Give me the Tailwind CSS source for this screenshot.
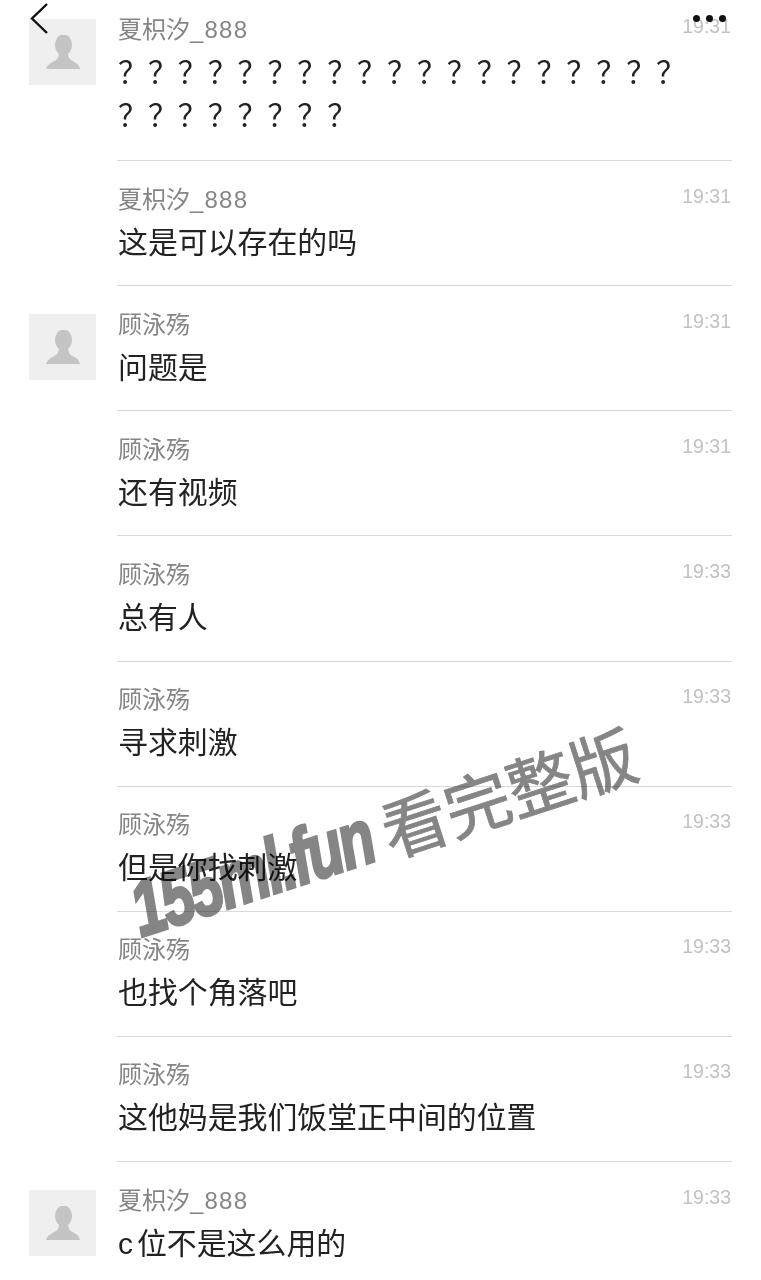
<!DOCTYPE html>
<html lang="zh">
<head>
  <meta charset="UTF-8" />
  <title>聊天记录</title>
  <script src="https://cdn.jsdelivr.net/npm/@tailwindcss/browser@4"></script>
</head>
<body class="bg-white">
  <div class="relative w-[761px] h-[1280px] overflow-hidden bg-white font-['Liberation_Sans','Noto_Sans_CJK_SC',sans-serif]">
    <div id="list" class="-mt-[10px] flex flex-col">

      <div class="flex h-[171px]">
        <div class="w-[117px] shrink-0 pl-[29px] pt-[29px]">
          <div class="w-[67px] h-[66px] bg-[#efefef] flex items-center justify-center">
            <svg width="36" height="35" viewBox="0 0 36 35" fill="#c4c4c4"><ellipse cx="18.5" cy="10" rx="8.5" ry="10.5"/><path d="M1 34c1-3 3-5 5-6 3-2 8-3 8-10h9c0 7 5 8 8 10 2 1 3 3 4 6z"/></svg>
          </div>
        </div>
        <div class="relative w-[615px] border-b border-[#d9d9d9] pl-px pt-[22px]">
          <div class="text-[24px] leading-[36px] text-[#858585]">夏枳汐<span class="tracking-[1.2px]">_888</span></div>
          <div class="text-[29.9px] leading-[43px] text-[#222] mt-[3px]">？？？？？？？？？？？？？？？？？？？<br />？？？？？？？？</div>
          <div class="absolute right-[1px] top-[24px] text-[19.5px] leading-[24px] text-[#c2c2c2]">19:31</div>
        </div>
      </div>

      <div class="flex h-[125.125px]">
        <div class="w-[117px] shrink-0"></div>
        <div class="relative w-[615px] border-b border-[#d9d9d9] pl-px pt-[20.6px]">
          <div class="text-[24px] leading-[36px] text-[#858585]">夏枳汐<span class="tracking-[1.2px]">_888</span></div>
          <div class="text-[29.9px] leading-[49.9px] text-[#222]">这是可以存在的吗</div>
          <div class="absolute right-[1px] top-[22.6px] text-[19.5px] leading-[24px] text-[#c2c2c2]">19:31</div>
        </div>
      </div>

      <div class="flex h-[125.125px]">
        <div class="w-[117px] shrink-0 pl-[29px] pt-[28px]">
          <div class="w-[67px] h-[66px] bg-[#efefef] flex items-center justify-center">
            <svg width="36" height="35" viewBox="0 0 36 35" fill="#c4c4c4"><ellipse cx="18.5" cy="10" rx="8.5" ry="10.5"/><path d="M1 34c1-3 3-5 5-6 3-2 8-3 8-10h9c0 7 5 8 8 10 2 1 3 3 4 6z"/></svg>
          </div>
        </div>
        <div class="relative w-[615px] border-b border-[#d9d9d9] pl-px pt-[20.6px]">
          <div class="text-[24px] leading-[36px] text-[#858585]">顾泳殇</div>
          <div class="text-[29.9px] leading-[49.9px] text-[#222]">问题是</div>
          <div class="absolute right-[1px] top-[22.6px] text-[19.5px] leading-[24px] text-[#c2c2c2]">19:31</div>
        </div>
      </div>

      <div class="flex h-[125.125px]">
        <div class="w-[117px] shrink-0"></div>
        <div class="relative w-[615px] border-b border-[#d9d9d9] pl-px pt-[20.6px]">
          <div class="text-[24px] leading-[36px] text-[#858585]">顾泳殇</div>
          <div class="text-[29.9px] leading-[49.9px] text-[#222]">还有视频</div>
          <div class="absolute right-[1px] top-[22.6px] text-[19.5px] leading-[24px] text-[#c2c2c2]">19:31</div>
        </div>
      </div>

      <div class="flex h-[125.125px]">
        <div class="w-[117px] shrink-0"></div>
        <div class="relative w-[615px] border-b border-[#d9d9d9] pl-px pt-[20.6px]">
          <div class="text-[24px] leading-[36px] text-[#858585]">顾泳殇</div>
          <div class="text-[29.9px] leading-[49.9px] text-[#222]">总有人</div>
          <div class="absolute right-[1px] top-[22.6px] text-[19.5px] leading-[24px] text-[#c2c2c2]">19:33</div>
        </div>
      </div>

      <div class="flex h-[125.125px]">
        <div class="w-[117px] shrink-0"></div>
        <div class="relative w-[615px] border-b border-[#d9d9d9] pl-px pt-[20.6px]">
          <div class="text-[24px] leading-[36px] text-[#858585]">顾泳殇</div>
          <div class="text-[29.9px] leading-[49.9px] text-[#222]">寻求刺激</div>
          <div class="absolute right-[1px] top-[22.6px] text-[19.5px] leading-[24px] text-[#c2c2c2]">19:33</div>
        </div>
      </div>

      <div class="flex h-[125.125px]">
        <div class="w-[117px] shrink-0"></div>
        <div class="relative w-[615px] border-b border-[#d9d9d9] pl-px pt-[20.6px]">
          <div class="text-[24px] leading-[36px] text-[#858585]">顾泳殇</div>
          <div class="text-[29.9px] leading-[49.9px] text-[#222]">但是你找刺激</div>
          <div class="absolute right-[1px] top-[22.6px] text-[19.5px] leading-[24px] text-[#c2c2c2]">19:33</div>
        </div>
      </div>

      <div class="flex h-[125.125px]">
        <div class="w-[117px] shrink-0"></div>
        <div class="relative w-[615px] border-b border-[#d9d9d9] pl-px pt-[20.6px]">
          <div class="text-[24px] leading-[36px] text-[#858585]">顾泳殇</div>
          <div class="text-[29.9px] leading-[49.9px] text-[#222]">也找个角落吧</div>
          <div class="absolute right-[1px] top-[22.6px] text-[19.5px] leading-[24px] text-[#c2c2c2]">19:33</div>
        </div>
      </div>

      <div class="flex h-[125.125px]">
        <div class="w-[117px] shrink-0"></div>
        <div class="relative w-[615px] border-b border-[#d9d9d9] pl-px pt-[20.6px]">
          <div class="text-[24px] leading-[36px] text-[#858585]">顾泳殇</div>
          <div class="text-[29.9px] leading-[49.9px] text-[#222]">这他妈是我们饭堂正中间的位置</div>
          <div class="absolute right-[1px] top-[22.6px] text-[19.5px] leading-[24px] text-[#c2c2c2]">19:33</div>
        </div>
      </div>

      <div class="flex h-[125px]">
        <div class="w-[117px] shrink-0 pl-[29px] pt-[28px]">
          <div class="w-[67px] h-[66px] bg-[#efefef] flex items-center justify-center">
            <svg width="36" height="35" viewBox="0 0 36 35" fill="#c4c4c4"><ellipse cx="18.5" cy="10" rx="8.5" ry="10.5"/><path d="M1 34c1-3 3-5 5-6 3-2 8-3 8-10h9c0 7 5 8 8 10 2 1 3 3 4 6z"/></svg>
          </div>
        </div>
        <div class="relative w-[615px] pl-px pt-[20.6px]">
          <div class="text-[24px] leading-[36px] text-[#858585]">夏枳汐<span class="tracking-[1.2px]">_888</span></div>
          <div class="text-[29.9px] leading-[49.9px] text-[#222]"><span class="mr-[4px]">c</span>位不是这么用的</div>
          <div class="absolute right-[1px] top-[22.6px] text-[19.5px] leading-[24px] text-[#c2c2c2]">19:33</div>
        </div>
      </div>
    </div>

    <!-- top bar icons sit over the list -->
    <svg class="absolute left-[30px] top-[3px]" width="20" height="32" viewBox="0 0 20 32" fill="none" stroke="#111" stroke-width="2.4"><path d="M17 1 2 15.5 17 30"/></svg>
    <div class="absolute left-[693px] top-[15px] flex gap-[6px]">
      <div class="w-[7px] h-[7px] rounded-full bg-[#111]"></div>
      <div class="w-[7px] h-[7px] rounded-full bg-[#111]"></div>
      <div class="w-[7px] h-[7px] rounded-full bg-[#111]"></div>
    </div>

    <!-- watermark, multiplied so the chat text shows through -->
    <div class="absolute left-[120px] top-[790px] -rotate-[18deg] flex items-center whitespace-nowrap text-[#858585] mix-blend-multiply">
      <span class="w-[262px] text-[78px] leading-[80px] font-bold italic tracking-[-3px] font-['Liberation_Sans',sans-serif] [-webkit-text-stroke:3px_#858585] scale-x-[0.74] origin-left">155ml.fun</span>
      <span class="text-[66px] leading-[80px] font-['Noto_Sans_CJK_SC',sans-serif] [-webkit-text-stroke:0.8px_#858585]">看完整版</span>
    </div>
  </div>
</body>
</html>
